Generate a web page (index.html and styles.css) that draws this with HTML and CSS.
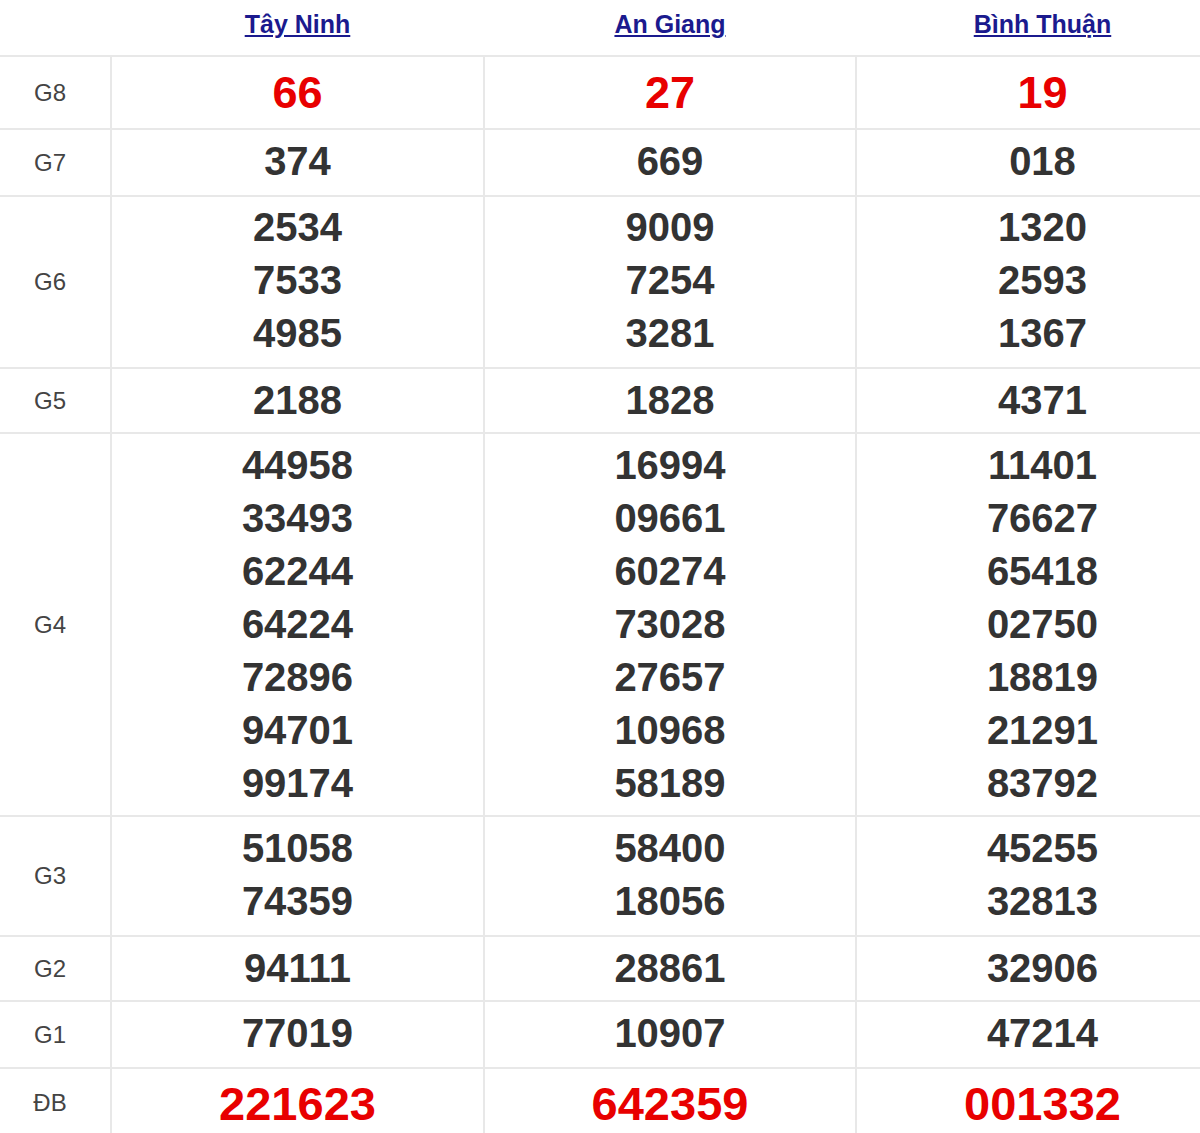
FILE: index.html
```html
<!DOCTYPE html>
<html lang="vi">
<head>
<meta charset="utf-8">
<title>Kết quả xổ số</title>
<link rel="stylesheet" href="styles.css">
</head>
<body>
<table class="kq">
  <colgroup>
    <col class="c-label">
    <col class="c-prov">
    <col class="c-mid">
    <col class="c-prov">
  </colgroup>
  <thead>
    <tr class="head">
      <th></th>
      <th><a href="#">Tây Ninh</a></th>
      <th><a href="#">An Giang</a></th>
      <th><a href="#">Bình Thuận</a></th>
    </tr>
  </thead>
  <tbody>
    <tr class="g8">
      <td class="lbl">G8</td>
      <td class="num red">66</td>
      <td class="num red">27</td>
      <td class="num red">19</td>
    </tr>
    <tr class="tall">
      <td class="lbl">G7</td>
      <td class="num">374</td>
      <td class="num">669</td>
      <td class="num">018</td>
    </tr>
    <tr class="g6">
      <td class="lbl">G6</td>
      <td class="num"><div>2534</div><div>7533</div><div>4985</div></td>
      <td class="num"><div>9009</div><div>7254</div><div>3281</div></td>
      <td class="num"><div>1320</div><div>2593</div><div>1367</div></td>
    </tr>
    <tr>
      <td class="lbl">G5</td>
      <td class="num">2188</td>
      <td class="num">1828</td>
      <td class="num">4371</td>
    </tr>
    <tr>
      <td class="lbl">G4</td>
      <td class="num"><div>44958</div><div>33493</div><div>62244</div><div>64224</div><div>72896</div><div>94701</div><div>99174</div></td>
      <td class="num"><div>16994</div><div>09661</div><div>60274</div><div>73028</div><div>27657</div><div>10968</div><div>58189</div></td>
      <td class="num"><div>11401</div><div>76627</div><div>65418</div><div>02750</div><div>18819</div><div>21291</div><div>83792</div></td>
    </tr>
    <tr class="g3">
      <td class="lbl">G3</td>
      <td class="num"><div>51058</div><div>74359</div></td>
      <td class="num"><div>58400</div><div>18056</div></td>
      <td class="num"><div>45255</div><div>32813</div></td>
    </tr>
    <tr>
      <td class="lbl">G2</td>
      <td class="num">94111</td>
      <td class="num">28861</td>
      <td class="num">32906</td>
    </tr>
    <tr class="tall">
      <td class="lbl">G1</td>
      <td class="num">77019</td>
      <td class="num">10907</td>
      <td class="num">47214</td>
    </tr>
    <tr class="db">
      <td class="lbl">ĐB</td>
      <td class="num red">221623</td>
      <td class="num red">642359</td>
      <td class="num red">001332</td>
    </tr>
  </tbody>
</table>
</body>
</html>
```

FILE: styles.css
```css
html, body {
  margin: 0;
  padding: 0;
  background: #fff;
  overflow: hidden;
}

body {
  width: 1200px;
  font-family: "Liberation Sans", Arial, sans-serif;
}

.kq {
  border-collapse: collapse;
  table-layout: fixed;
  width: 1229px;
}

.c-label { width: 111px; }
.c-prov { width: 373px; }
.c-mid { width: 372px; }

.head th {
  height: 55px;
  padding: 0;
  text-align: center;
  vertical-align: top;
  border-bottom: 2px solid #e8e8e8;
}

.head a {
  display: inline-block;
  margin-top: 9px;
  font-size: 25px;
  line-height: 30px;
  font-weight: bold;
  color: #1b1a8e;
  text-decoration: underline;
  text-decoration-thickness: 2px;
  text-underline-offset: 2px;
}

td {
  border: 2px solid #e8e8e8;
  text-align: center;
  vertical-align: middle;
}

td.lbl {
  border-left: none;
  padding: 0 10px 0 0;
  font-size: 24px;
  color: #444;
}

td.num {
  padding: 5px 0 5px;
  font-size: 40px;
  line-height: 53px;
  font-weight: bold;
  color: #333;
}

.g8 td.num {
  padding: 9px 0 9px;
  font-size: 45px;
}

.tall td.num {
  padding: 5px 0 7px;
}

.g6 td.num {
  padding: 4px 0 7px;
}

.g3 td.num {
  padding: 5px 0 7px;
}

.db td {
  vertical-align: top;
}

.db td.lbl {
  padding-top: 20px;
}

.db td.num {
  padding: 8px 0 20px;
  font-size: 47px;
}

td.red {
  color: #e80000;
}
```
